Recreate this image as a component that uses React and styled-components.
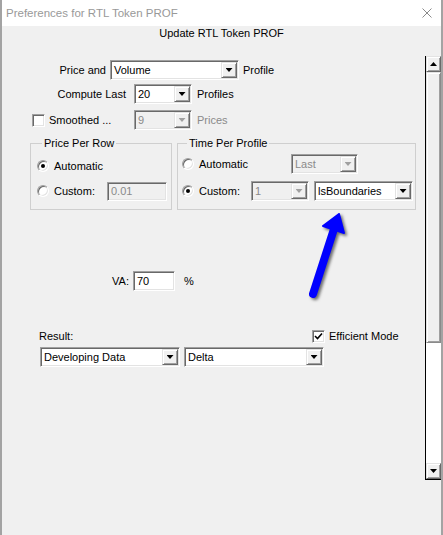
import React from "react";
import styled, { createGlobalStyle } from "styled-components";

const GlobalStyle = createGlobalStyle`
  html, body {
    margin: 0;
    padding: 0;
    background: #f0f0f0;
  }
  body {
    font-family: "Liberation Sans", Arial, sans-serif;
    font-size: 11px;
    color: #000;
  }
`;

const Window = styled.div`
  position: relative;
  box-sizing: border-box;
  width: 443px;
  height: 535px;
  display: flex;
  flex-direction: column;
  border-left: 2px solid #a3a3a3;
  border-right: 2px solid #a3a3a3;
  overflow: hidden;
`;

const TitleBar = styled.div`
  height: 26px;
  flex-shrink: 0;
  background: #fff;
  display: flex;
  align-items: center;
  justify-content: space-between;
  padding: 0 9px 0 4px;
`;

const Title = styled.span`
  color: #999;
  font-size: 11.5px;
`;

const Frame = styled.div`
  flex: 1;
  display: flex;
  flex-direction: column;
  background: #f0f0f0;
`;

const Heading = styled.div`
  height: 16px;
  line-height: 15px;
  text-align: center;
`;

const Main = styled.div`
  flex: 1;
  display: flex;
`;

const Form = styled.div`
  flex: 1;
  display: flex;
  flex-direction: column;
  padding-top: 18px;
`;

const Row = styled.div`
  display: flex;
  align-items: center;
  flex-shrink: 0;
  height: ${(p) => p.$h || 20}px;
  margin-top: ${(p) => p.$top || 0}px;
  padding-left: ${(p) => p.$left || 0}px;
  gap: ${(p) => p.$gap || 0}px;
`;

const Label = styled.span`
  flex-shrink: 0;
  width: ${(p) => (p.$w ? `${p.$w}px` : "auto")};
  text-align: ${(p) => p.$align || "left"};
  margin-right: ${(p) => p.$mr || 0}px;
  color: ${(p) => (p.$muted ? "#8a8a8a" : "#000")};
  white-space: nowrap;
`;

const Sunken = styled.div`
  box-sizing: border-box;
  flex-shrink: 0;
  width: ${(p) => p.$w}px;
  height: ${(p) => p.$h || 20}px;
  display: flex;
  align-items: center;
  background: ${(p) => (p.$disabled ? "#f0f0f0" : "#fff")};
  color: ${(p) => (p.$disabled ? "#8a8a8a" : "#000")};
  border: 1px solid;
  border-color: #a0a0a0 #fff #fff #a0a0a0;
  box-shadow: inset 1px 1px #696969, inset -1px -1px #e3e3e3;
  padding: 1px;
  margin-right: ${(p) => p.$mr || 0}px;
`;

const FieldText = styled.span`
  flex: 1;
  padding-left: 2px;
  white-space: nowrap;
  overflow: hidden;
`;

const DropButton = styled.span`
  box-sizing: border-box;
  width: 16px;
  height: 100%;
  background: #f0f0f0;
  border: 1px solid;
  border-color: #e3e3e3 #696969 #696969 #e3e3e3;
  box-shadow: inset 1px 1px #fff, inset -1px -1px #a0a0a0;
  display: flex;
  align-items: center;
  justify-content: center;
  &::after {
    content: "";
    width: 7px;
    height: 4px;
    background: ${(p) => (p.$disabled ? "#a0a0a0" : "#000")};
    clip-path: polygon(0 0, 100% 0, 50% 100%);
  }
`;

const Radio = styled.span`
  box-sizing: border-box;
  flex-shrink: 0;
  width: 12px;
  height: 12px;
  border-radius: 50%;
  background: #fff;
  border: 1px solid;
  border-color: #a0a0a0 #fff #fff #a0a0a0;
  box-shadow: inset 1px 1px #696969, inset -1px -1px #e3e3e3;
  display: flex;
  align-items: center;
  justify-content: center;
  margin-right: 5px;
  &::after {
    content: "";
    width: 4px;
    height: 4px;
    border-radius: 50%;
    background: #000;
    display: ${(p) => (p.$checked ? "block" : "none")};
  }
`;

const Check = styled.span`
  box-sizing: border-box;
  flex-shrink: 0;
  width: 13px;
  height: 13px;
  background: #fff;
  border: 1px solid;
  border-color: #a0a0a0 #fff #fff #a0a0a0;
  box-shadow: inset 1px 1px #696969, inset -1px -1px #e3e3e3;
  display: flex;
  align-items: center;
  justify-content: center;
  margin-right: 4px;
`;

const Groups = styled.div`
  display: flex;
  gap: 5px;
  padding-left: 28px;
  margin-top: 7px;
`;

const Group = styled.fieldset`
  box-sizing: border-box;
  margin: 0;
  min-width: 0;
  width: ${(p) => p.$w}px;
  border: 1px solid #cfcfcf;
  padding: ${(p) => p.$pt}px 0 8px ${(p) => p.$pl}px;
  display: flex;
  flex-direction: column;
  gap: ${(p) => p.$gap}px;
`;

const Legend = styled.legend`
  padding: 0 2px;
  margin-left: 5px;
  line-height: 13px;
  height: 13px;
`;

const ScrollBar = styled.div`
  box-sizing: border-box;
  width: 16px;
  height: 424px;
  margin-top: 14px;
  display: flex;
  flex-direction: column;
  border-left: 1px solid #000;
  border-bottom: 1px solid #000;
`;

const ScrollButton = styled.div`
  box-sizing: border-box;
  height: 16px;
  background: #f0f0f0;
  border: 1px solid;
  border-color: #e3e3e3 #696969 #696969 #e3e3e3;
  box-shadow: inset 1px 1px #fff, inset -1px -1px #a0a0a0;
  display: flex;
  align-items: center;
  justify-content: center;
  &::after {
    content: "";
    width: 7px;
    height: 4px;
    background: #000;
    clip-path: ${(p) =>
      p.$up
        ? "polygon(50% 0, 100% 100%, 0 100%)"
        : "polygon(0 0, 100% 0, 50% 100%)"};
  }
`;

const Thumb = styled.div`
  box-sizing: border-box;
  height: 271px;
  background: #f0f0f0;
  border: 1px solid;
  border-color: #e3e3e3 #8a8a8a #8a8a8a #e3e3e3;
  box-shadow: inset 1px 1px #fff, inset -1px -1px #a0a0a0;
`;

const Track = styled.div`
  flex: 1;
  background: #fff;
`;

const Arrow = styled.svg`
  position: absolute;
  left: 298px;
  top: 205px;
  width: 60px;
  height: 100px;
  pointer-events: none;
  filter: drop-shadow(2px 2px 1.5px rgba(0, 0, 0, 0.55));
`;

const Combo = ({ w, h, disabled, children, mr }) => (
  <Sunken $w={w} $h={h} $disabled={disabled} $mr={mr}>
    <FieldText>{children}</FieldText>
    <DropButton $disabled={disabled} />
  </Sunken>
);

const TextBox = ({ w, h, disabled, children, mr }) => (
  <Sunken $w={w} $h={h} $disabled={disabled} $mr={mr}>
    <FieldText>{children}</FieldText>
  </Sunken>
);

const CheckMark = () => (
  <svg width="9" height="9" viewBox="0 0 9 9">
    <path d="M1 4 L3.5 6.5 L8 1.5" fill="none" stroke="#000" strokeWidth="1.6" />
  </svg>
);

export default function App() {
  return (
    <>
      <GlobalStyle />
      <Window>
        <TitleBar>
          <Title>Preferences for RTL Token PROF</Title>
          <svg width="10" height="10" viewBox="0 0 10 10">
            <path d="M0.5 0.5 L9.5 9.5 M9.5 0.5 L0.5 9.5" stroke="#8a8a8a" strokeWidth="1" />
          </svg>
        </TitleBar>
        <Frame>
          <Heading>Update RTL Token PROF</Heading>
          <Main>
            <Form>
              <Row $left={48}>
                <Label $w={56} $align="right" $mr={4}>Price and</Label>
                <Combo w={129} mr={4}>Volume</Combo>
                <Label>Profile</Label>
              </Row>
              <Row $left={48} $top={4}>
                <Label $w={76} $align="right" $mr={8}>Compute Last</Label>
                <Combo w={58} mr={5}>20</Combo>
                <Label>Profiles</Label>
              </Row>
              <Row $left={30} $top={6}>
                <Check />
                <Label $w={85}>Smoothed ...</Label>
                <Combo w={58} mr={5} disabled>9</Combo>
                <Label $muted>Prices</Label>
              </Row>

              <Groups>
                <Group $w={142} $pt={6} $pl={6} $gap={5}>
                  <Legend>Price Per Row</Legend>
                  <Row>
                    <Radio $checked />
                    <Label>Automatic</Label>
                  </Row>
                  <Row>
                    <Radio />
                    <Label $w={53}>Custom:</Label>
                    <TextBox w={60} h={19} disabled>0.01</TextBox>
                  </Row>
                </Group>
                <Group $w={239} $pt={4} $pl={4} $gap={7}>
                  <Legend>Time Per Profile</Legend>
                  <Row>
                    <Radio />
                    <Label $w={92}>Automatic</Label>
                    <Combo w={67} disabled>Last</Combo>
                  </Row>
                  <Row>
                    <Radio $checked />
                    <Label $w={52}>Custom:</Label>
                    <Combo w={58} mr={5} disabled>1</Combo>
                    <Combo w={99}>lsBoundaries</Combo>
                  </Row>
                </Group>
              </Groups>

              <Row $left={100} $top={61}>
                <Label $w={27} $align="right" $mr={4}>VA:</Label>
                <TextBox w={42} mr={9}>70</TextBox>
                <Label>%</Label>
              </Row>

              <Row $left={37} $top={38} $h={14}>
                <Label $w={273}>Result:</Label>
                <Check>
                  <CheckMark />
                </Check>
                <Label>Efficient Mode</Label>
              </Row>
              <Row $left={38} $top={4} $gap={4}>
                <Combo w={140}>Developing Data</Combo>
                <Combo w={140}>Delta</Combo>
              </Row>
            </Form>
            <ScrollBar>
              <ScrollButton $up />
              <Thumb />
              <Track />
              <ScrollButton />
            </ScrollBar>
          </Main>
        </Frame>
        <Arrow viewBox="0 0 60 100">
          <line x1="13" y1="89" x2="34" y2="24" stroke="#0000ff" strokeWidth="8" strokeLinecap="round" />
          <polygon
            points="39,9 23,21 44,28"
            fill="#0000ff"
            stroke="#0000ff"
            strokeWidth="2"
            strokeLinejoin="round"
          />
        </Arrow>
      </Window>
    </>
  );
}
